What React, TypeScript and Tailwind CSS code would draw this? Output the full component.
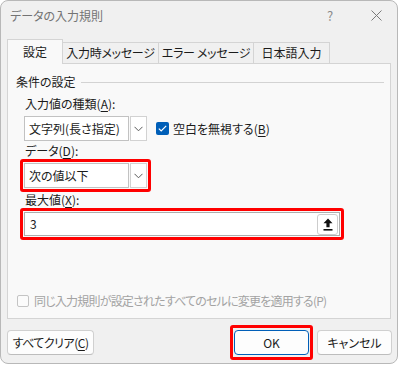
import type { ReactNode } from "react";

const font = "font-['Noto_Sans_CJK_JP','Noto_Sans',sans-serif] [font-feature-settings:'palt']";

function U({ children }: { children: ReactNode }) {
  return <span className="underline decoration-1 underline-offset-[2px]">{children}</span>;
}

function Chevron() {
  return (
    <svg width="9" height="6" viewBox="0 0 9 6">
      <path d="M0.5 0.8 L4.5 4.8 L8.5 0.8" fill="none" stroke="#5a5a5a" strokeWidth="1" />
    </svg>
  );
}

function Combo({ value }: { value: string }) {
  return (
    <div className="flex h-[25px]">
      <div className="flex w-[105px] items-center border border-[#c2c2c2] bg-white pl-[4px] text-[#1b1b1b]">{value}</div>
      <div className="ml-[1px] flex w-[17px] items-center justify-center border border-[#d2d2d2] bg-white">
        <Chevron />
      </div>
    </div>
  );
}

export default function App() {
  const btn = "flex h-[25px] items-center justify-center rounded-[4px] border bg-[#fdfdfd]";
  const red = "self-start rounded-[3px] border-[3px] border-[#ff0000]";

  return (
    <div className={`h-[365px] w-[400px] bg-white text-[12px] leading-[16px] text-[#1b1b1b] ${font}`}>
      <div className="flex h-[364px] w-[398px] flex-col overflow-hidden rounded-[8px] border border-[#b8b8b8] bg-[#f0f0f0]">
        {/* title bar */}
        <div className="flex h-[29px] items-center pl-[9px] pr-[11px]">
          <span className="text-[#737373]">データの入力規則</span>
          <span className="ml-auto flex w-[20px] justify-center text-[13px] text-[#8a8a8a]">?</span>
          <span className="ml-[26px] flex w-[20px] justify-center">
            <svg width="11" height="11" viewBox="0 0 11 11">
              <path d="M0.5 0.5 L10.5 10.5 M10.5 0.5 L0.5 10.5" stroke="#7a7a7a" strokeWidth="1" />
            </svg>
          </span>
        </div>

        {/* tabs */}
        <div className="relative z-10 mt-[9px] flex h-[25px] items-end pl-[6px]">
          <div className="flex h-[25px] w-[56px] items-center justify-center border-x border-t border-[#d4d4d4] bg-[#f9f9f9] pb-[1px]">
            設定
          </div>
          <div className="mb-[1px] flex h-[21px] w-[96px] items-center justify-center border-r border-t border-[#d4d4d4] tracking-[-0.3px]">
            入力時メッセージ
          </div>
          <div className="mb-[1px] flex h-[21px] w-[95px] items-center justify-center border-r border-t border-[#d4d4d4] tracking-[-0.3px]">
            エラー メッセージ
          </div>
          <div className="mb-[1px] flex h-[21px] w-[76px] items-center justify-center border-r border-t border-[#d4d4d4]">
            日本語入力
          </div>
        </div>

        {/* panel */}
        <div className="-mt-px ml-[6px] flex h-[256px] w-[384px] flex-col border border-[#d4d4d4] bg-[#f9f9f9]">
          <div className="mt-[10px] flex h-[16px] items-center pl-[8px]">
            <span>条件の設定</span>
            <div className="ml-[5px] mr-[6px] h-px flex-1 bg-[#d3d3d3]" />
          </div>

          <div className="mt-[6px] h-[16px] pl-[17px]">
            入力値の種類(<U>A</U>):
          </div>
          <div className="mt-[4px] flex h-[25px] items-center pl-[16px]">
            <Combo value="文字列(長さ指定)" />
            <div className="ml-[9px] flex h-[13px] w-[13px] items-center justify-center rounded-[2px] bg-[#005fb8]">
              <svg width="9" height="7" viewBox="0 0 9 7">
                <path d="M0.8 3.6 L3.2 5.9 L8.2 0.9" fill="none" stroke="white" strokeWidth="1.2" />
              </svg>
            </div>
            <span className="ml-[4px]">
              空白を無視する(<U>B</U>)
            </span>
          </div>

          <div className="mt-[2px] h-[16px] pl-[17px]">
            データ(<U>D</U>):
          </div>
          <div className={`ml-[12px] p-px ${red}`}>
            <Combo value="次の値以下" />
          </div>

          <div className="h-[16px] pl-[17px]">
            最大値(<U>X</U>):
          </div>
          <div className={`ml-[12px] p-px ${red}`}>
            <div className="flex h-[24px] w-[316px] items-center border border-[#adadad] bg-white pl-[5px] pr-[1px]">
              <span>3</span>
              <div className="ml-auto flex h-[21px] w-[21px] items-center justify-center rounded-[3px] border border-[#cdcdcd] bg-white">
                <svg width="10" height="13" viewBox="0 0 10 13">
                  <path d="M5 0.5 L9.5 5.2 L6.6 5.2 L6.6 9.3 L3.4 9.3 L3.4 5.2 L0.5 5.2 Z" fill="#111" />
                  <rect x="0.5" y="11" width="9" height="1.6" fill="#111" />
                </svg>
              </div>
            </div>
          </div>

          <div className="mb-[9px] mt-auto flex h-[16px] items-center pl-[9px] text-[#a3a3a3]">
            <div className="h-[12px] w-[12px] rounded-[2px] border border-[#c4c4c4] bg-[#fbfbfb]" />
            <span className="ml-[5px] tracking-[-0.8px]">同じ入力規則が設定されたすべてのセルに変更を適用する(P)</span>
          </div>
        </div>

        {/* buttons */}
        <div className="mt-[6px] flex h-[35px] items-center">
          <div className={`ml-[6px] w-[87px] border-[#d0d0d0] border-b-[#bdbdbd] tracking-[-0.5px] ${btn}`}>
            すべてクリア(<U>C</U>)
          </div>
          <div className={`ml-auto px-px py-[2px] ${red}`}>
            <div className={`w-[75px] border-[#005fb8] ${btn}`}>OK</div>
          </div>
          <div className={`ml-[4px] mr-[5px] w-[75px] border-[#d0d0d0] border-b-[#bdbdbd] ${btn}`}>キャンセル</div>
        </div>
      </div>
    </div>
  );
}
